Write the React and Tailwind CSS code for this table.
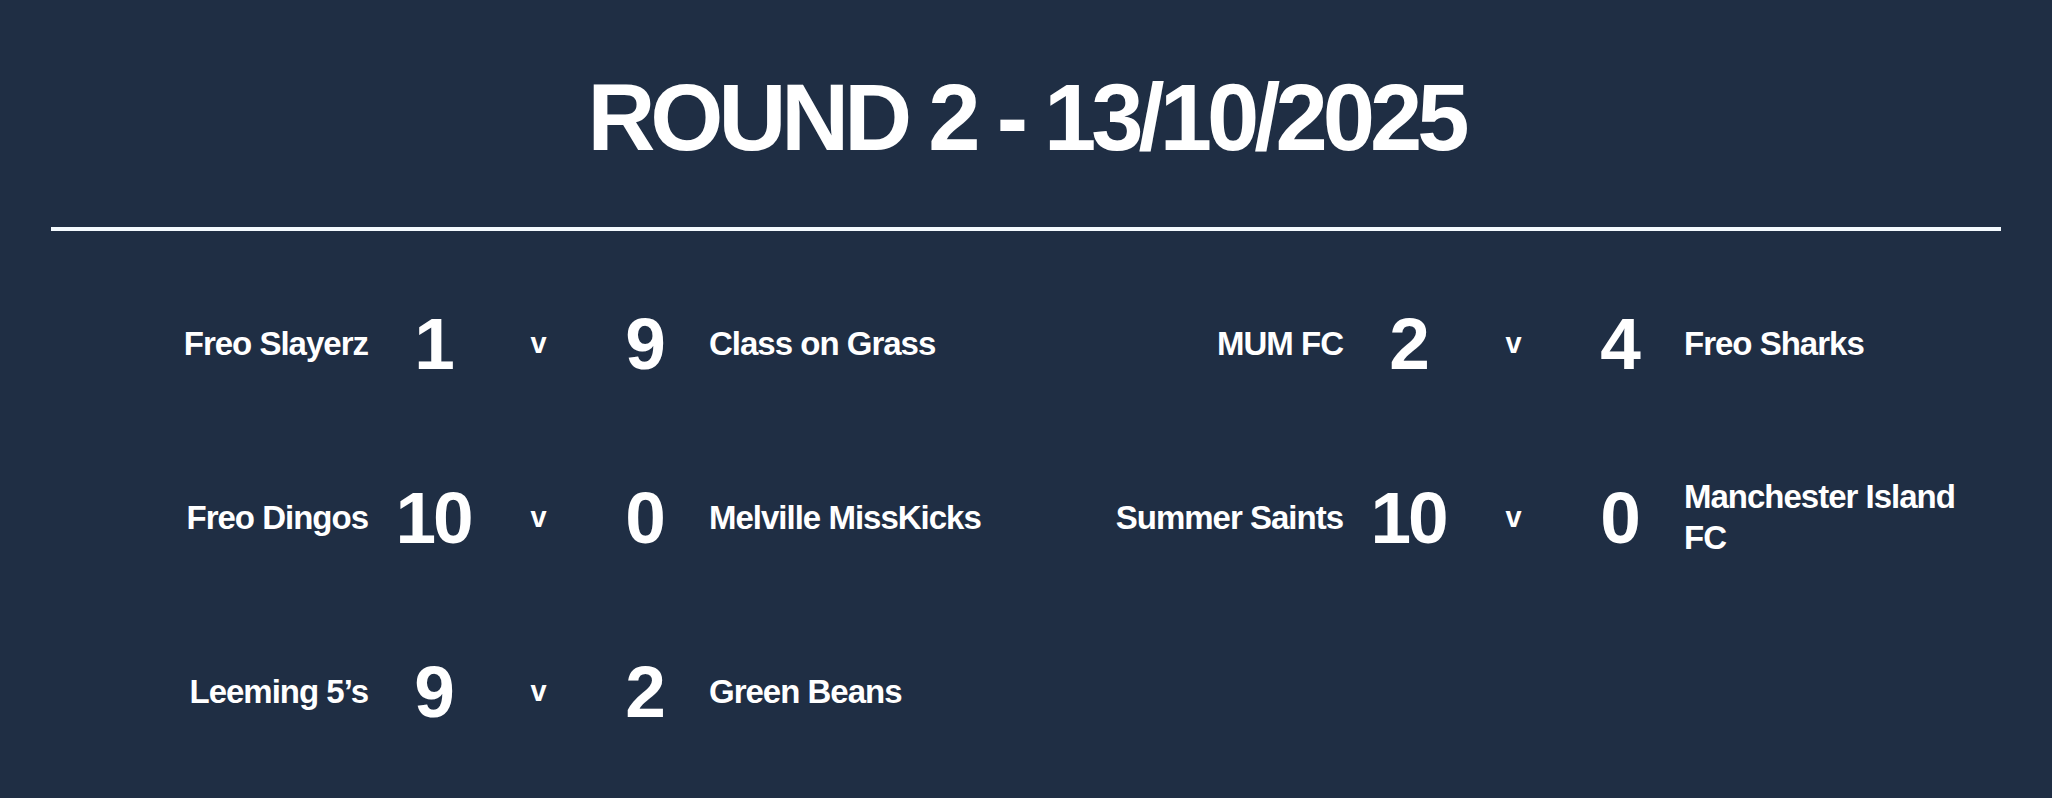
const matches = [
    { home: 'Freo Slayerz', homeScore: 1, away: 'Class on Grass', awayScore: 9 },
    { home: 'MUM FC', homeScore: 2, away: 'Freo Sharks', awayScore: 4 },
    { home: 'Freo Dingos', homeScore: 10, away: 'Melville MissKicks', awayScore: 0 },
    { home: 'Summer Saints', homeScore: 10, away: 'Manchester Island FC', awayScore: 0 },
    { home: "Leeming 5’s", homeScore: 9, away: 'Green Beans', awayScore: 2 },
];

const MatchRow = ({ match }) => {
    return (
        <div className="flex items-center justify-center h-[174px]">
            <div className="w-[300px] text-right text-[33px] leading-[41px] font-bold tracking-[-1px]">
                {match.home}
            </div>
            <div className="w-[130px] text-center text-[73px] leading-none font-bold tracking-[-3px]">
                {match.homeScore}
            </div>
            <div className="w-[81px] text-center text-[29px] leading-none font-bold">
                v
            </div>
            <div className="w-[130px] text-center text-[73px] leading-none font-bold tracking-[-3px]">
                {match.awayScore}
            </div>
            <div className="w-[300px] text-left text-[33px] leading-[41px] font-bold tracking-[-1px]">
                {match.away}
            </div>
        </div>
    );
};

const App = () => {
    return (
        <div className="min-h-[798px] bg-[#1f2e44] text-white px-[51px] font-['Liberation_Sans',Arial,sans-serif]">
            {/* Title */}
            <h1 className="pt-[71px] text-center text-[94px] leading-none font-bold tracking-[-5px]">
                ROUND 2 - 13/10/2025
            </h1>

            <div className="mt-[62px] h-[4px] bg-[#f4faff]"></div>

            {/* Results */}
            <div className="grid grid-cols-2 pt-[25px]">
                {matches.map((match, i) => (
                    <MatchRow key={i} match={match} />
                ))}
            </div>
        </div>
    );
};

export default App;
